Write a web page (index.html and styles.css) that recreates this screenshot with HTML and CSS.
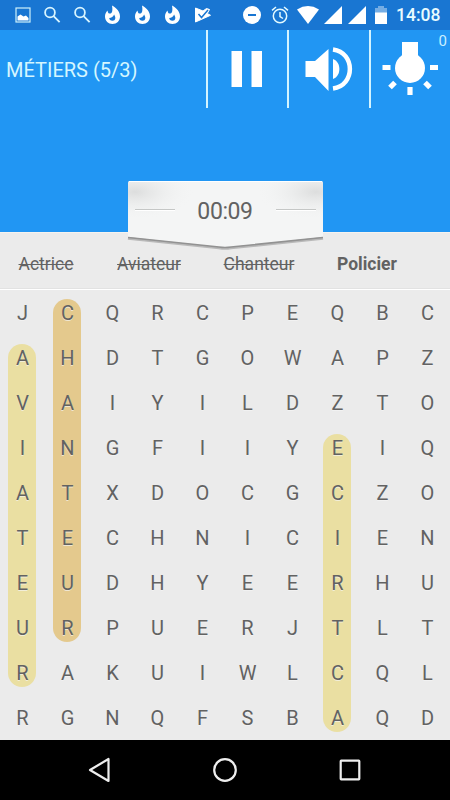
FILE: index.html
```html
<!DOCTYPE html>
<html lang="fr">
<head>
<meta charset="utf-8">
<title>Métiers</title>
<link rel="stylesheet" href="styles.css">
</head>
<body>
<div class="status">
  <div class="notifications">
    <svg viewBox="0 0 30 30"><rect x="8" y="8" width="14" height="14" fill="none" stroke="#cdf1fb" stroke-width="1.2"/><path fill="#fff" d="M9.500 20.500v-4l3-2 3 2 2.500-1 2.500 2.500v2.500z"/></svg>
    <svg viewBox="0 0 30 30" class="line"><circle cx="12" cy="12.500" r="4.900"/><path d="M15.600 16.100l6 6"/></svg>
    <svg viewBox="0 0 30 30" class="line"><circle cx="12" cy="12.500" r="4.900"/><path d="M15.600 16.100l6 6"/></svg>
    <svg viewBox="0 0 30 30"><use href="#flame"/></svg>
    <svg viewBox="0 0 30 30"><use href="#flame"/></svg>
    <svg viewBox="0 0 30 30"><g id="flame"><path fill="#fff" d="M14 5.500c5 2.500 8 6.500 8 11 0 4.500-3.300 7.500-7.500 7.500S7 21 7 16.500c0-2.500 1-4.500 2.600-6.100 0 2 .9 3.200 2.200 3.200 2.700 0 3-3.600 2.200-8.100z"/><path fill="#1976d2" d="M16.100 14.500c2 3 1.600 6.200-1.600 6.200-2 0-3.300-1.200-3.300-2.800 2.400 0 4-1 4.900-3.400z"/></g></svg>
    <svg viewBox="0 0 30 30"><path fill="#fff" stroke="#fff" stroke-linejoin="round" d="M7.500 8v14L22.500 15.300 19.300 13.500 21.500 9.500 18.500 8.500 15 11z"/><path d="M10.500 14l3 3.500 6.500-7.500" fill="none" stroke="#1976d2" stroke-width="1.500"/></svg>
  </div>
  <div class="system">
    <svg class="dnd" viewBox="0 0 18 18"><circle cx="9" cy="9" r="9" fill="#fff"/><path d="M5 9h8" stroke="#1976d2" stroke-width="2"/></svg>
    <svg class="alarm" viewBox="0 0 18 18"><g fill="none" stroke="#e4faff" stroke-width="1.500"><circle cx="9" cy="10" r="6.700"/><path d="M9 6v4.500l3 2M1 4.300l4-3.300M17 4.300L13 1"/></g></svg>
    <svg class="wifi" viewBox="0 0 22 18"><path fill="#fff" d="M0 3.500Q11-3.300 22 3.500L11 18z"/></svg>
    <svg class="signal" viewBox="0 0 18 18"><path fill="#fff" d="M18 0v18H0z"/></svg>
    <svg class="signal second" viewBox="0 0 18 18"><path fill="#fff" d="M18 0v18H0z"/></svg>
    <svg class="battery" viewBox="0 0 12 18"><path fill="#75ade4" d="M0 2h3V0h6v2h3v5H0z"/><path fill="#fff" d="M0 6.500h12V18H0z"/></svg>
    <span class="clock">14:08</span>
  </div>
</div>
<header class="header">
  <div class="toolbar">
    <h1 class="title">MÉTIERS (5/3)</h1>
    <button class="tool" aria-label="Pause"><svg viewBox="0 0 80 78"><path fill="#fff" d="M24.500 21H35v36H24.500zM44.500 21H55v36H44.500z"/></svg></button>
    <button class="tool" aria-label="Son"><svg viewBox="0 0 80 78"><path fill="#fff" d="M17.500 31h9.500L40.500 19v42L27 47h-9.500z"/><path fill="#fff" d="M45 29c8.500 3 8.500 17 0 20z"/><path d="M45 19.500c22.500 3 22.500 36 0 39" fill="none" stroke="#fff" stroke-width="4.500"/></svg></button>
    <button class="tool" aria-label="Indice"><svg viewBox="0 0 80 78"><circle cx="40" cy="38" r="15" fill="#fff"/><path fill="#fff" d="M32 12h16v18H32z"/><path d="M12.500 37.500h8M60 37.500h8M40 57v8M25 52.500l-5 5M55 52.500l5 5" stroke="#fff" stroke-width="5.200"/></svg><span class="hints">0</span></button>
  </div>
  <div class="timer">
    <svg viewBox="0 0 197 74">
      <defs>
        <radialGradient id="shade"><stop offset="0" stop-color="#dcdddd"/><stop offset="1" stop-color="#f4f5f5" stop-opacity="0"/></radialGradient>
        <clipPath id="plate"><path d="M1 3q0-2 2-2h191q2 0 2 2v54L104 67q-6 1-12 0L1 57z"/></clipPath>
      </defs>
      <path d="M1 58l91 9.500q6 1 12 0L196 58" fill="none" stroke="#b9b9b9" stroke-width="3.500"/>
      <g clip-path="url(#plate)"><rect width="197" height="74" fill="#f4f5f5"/><ellipse cx="8" cy="12" rx="60" ry="28" fill="url(#shade)"/><ellipse cx="189" cy="12" rx="60" ry="28" fill="url(#shade)"/></g>
      <path d="M1 57.500L92 67q6 1 12 0l92-9.500" fill="none" stroke="#929292" stroke-width="1.500"/>
      <path d="M2 1.500h193" stroke="#fff"/>
      <path d="M8 29.500h40M149 29.500h40" stroke="#c5c7c6"/><path d="M8 30.500h40M149 30.500h40" stroke="#fff"/>
    </svg>
    <span class="time">00:09</span>
  </div>
</header>
<ul class="words">
  <li class="found">Actrice</li><li class="found">Aviateur</li><li class="found">Chanteur</li><li class="left">Policier</li>
</ul>
<main class="board" id="board">
  <i class="pill aviateur"></i><i class="pill chanteur"></i><i class="pill actrice"></i>
</main>
<nav class="nav">
  <svg viewBox="0 0 30 30"><path d="M23.500 4v22L5 15z"/></svg>
  <svg viewBox="0 0 30 30"><circle cx="15" cy="15" r="10.800"/></svg>
  <svg viewBox="0 0 30 30"><rect x="5.700" y="5.700" width="18.600" height="18.600" rx=".5"/></svg>
</nav>
<script src="board.js"></script>
</body>
</html>
```
FILE: styles.css
```css
* { box-sizing: border-box; }
body { margin: 0; width: 450px; height: 800px; overflow: hidden; background: #ebebeb; color: #626262; font-family: Roboto, sans-serif; display: flex; flex-direction: column; }
svg { display: block; }
.status { height: 30px; flex: none; background: #1976d2; display: flex; justify-content: space-between; }
.notifications { display: flex; padding-left: 7.500px; }
.notifications svg { width: 30px; height: 30px; }
.line { fill: none; stroke: #d8f5ff; stroke-width: 1.800; }
.system { display: flex; align-items: center; padding-right: 10px; }
.system svg { height: 18px; }
.dnd { width: 18px; margin-right: 10px; }
.alarm { width: 18px; margin-right: 8px; }
.wifi { width: 22px; margin-right: 5px; }
.signal { width: 18px; margin-right: 6px; }
.signal.second { margin-right: 9.500px; }
.battery { width: 12px; margin-right: 9px; }
.clock { width: 44px; color: #e9fbff; font-size: 17.500px; font-weight: 500; line-height: 31px; white-space: nowrap; }
.header { position: relative; flex: none; height: 202px; background: #2196f3; }
.toolbar { display: flex; height: 78px; }
.title { width: 206px; margin: 0; padding-left: 6px; font-size: 20px; font-weight: 400; line-height: 80px; color: #d5f6ff; white-space: nowrap; }
.tool { position: relative; width: 81.300px; height: 78px; padding: 0; border: 0; background: linear-gradient(90deg, #d3f4ff 1.600px, transparent 1.600px); font-family: inherit; }
.tool svg { width: 80px; height: 78px; margin-left: 1px; }
.hints { position: absolute; right: 3px; top: 2px; font-size: 15px; line-height: 19px; color: #c9efff; }
.timer { position: absolute; left: 126.500px; top: 150px; width: 197px; height: 74px; z-index: 1; }
.timer svg { width: 197px; height: 74px; }
.time { position: absolute; left: 0; top: 18px; width: 197px; text-align: center; font-size: 23px; line-height: 28px; letter-spacing: -.4px; }
.words { flex: none; height: 58px; margin: 0; padding: 7px 0 0; list-style: none; display: grid; grid-template-columns: 92px 114px 106px 110px; border-bottom: 1px solid #fff; font-size: 17.500px; line-height: 51px; text-align: center; box-shadow: inset 0 -1px #e2e2e2, inset 0 1px #f6f3ef; }
.found { text-decoration: line-through; text-decoration-thickness: 1px; }
.left { font-weight: 700; }
.board { flex: none; height: 450px; display: grid; grid-template: repeat(10, 45px) / repeat(10, 45px); }
.cell { z-index: 1; text-align: center; font-size: 20px; line-height: 46px; text-shadow: 0 1px #f7f7f7aa; }
.pill { margin: 8.500px 9px 8.500px 8px; border-radius: 14px; background: #eadfa2; }
.aviateur { grid-area: 2 / 1 / 10 / 2; }
.chanteur { grid-area: 1 / 2 / 9 / 3; background: #e4c98d; }
.actrice { grid-area: 4 / 8 / 11 / 9; }
.nav { flex: none; height: 60px; background: #000; display: flex; justify-content: center; align-items: center; gap: 95px; }
.nav svg { width: 30px; height: 30px; fill: none; stroke: #eee; stroke-width: 2.200; stroke-linejoin: round; }
```
FILE: board.js
```js
const rows = ["JCQRCPEQBC", "AHDTGOWAPZ", "VAIYILDZTO", "INGFIIYEIQ", "ATXDOCGCZO", "TECHNICIEN", "EUDHYEERHU", "URPUERJTLT", "RAKUIWLCQL", "RGNQFSBAQD"];
const board = document.getElementById("board");
rows.forEach((row, y) => [...row].forEach((letter, x) => {
  const cell = document.createElement("span");
  cell.className = "cell";
  cell.textContent = letter;
  cell.style.gridArea = `${y + 1} / ${x + 1}`;
  board.append(cell);
}));
```
